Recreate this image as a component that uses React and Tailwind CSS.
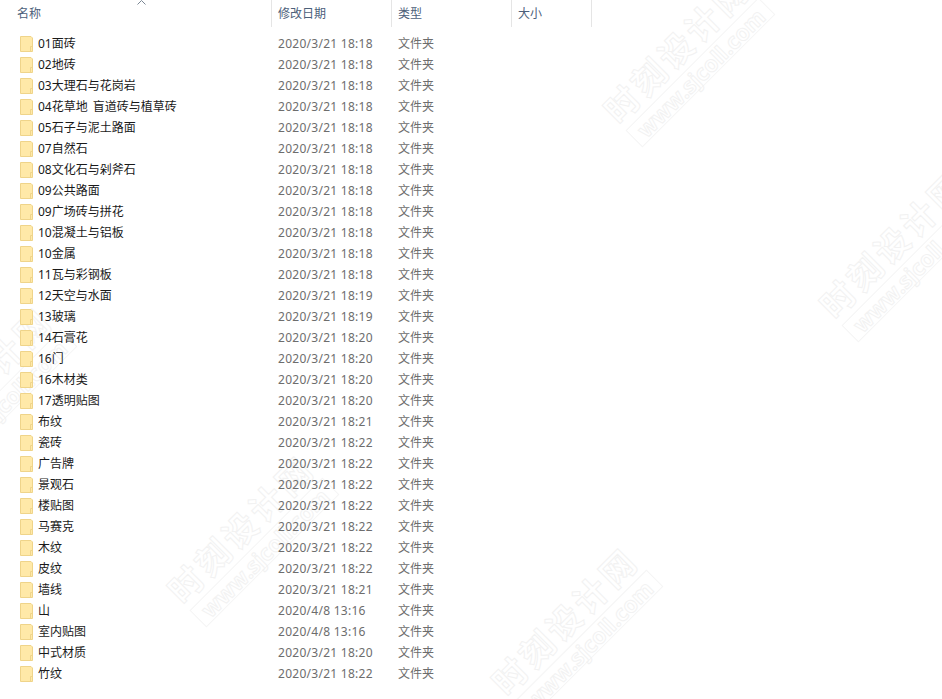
const rows = [
  ["01面砖", "2020/3/21 18:18"],
  ["02地砖", "2020/3/21 18:18"],
  ["03大理石与花岗岩", "2020/3/21 18:18"],
  ["04花草地 盲道砖与植草砖", "2020/3/21 18:18"],
  ["05石子与泥土路面", "2020/3/21 18:18"],
  ["07自然石", "2020/3/21 18:18"],
  ["08文化石与剁斧石", "2020/3/21 18:18"],
  ["09公共路面", "2020/3/21 18:18"],
  ["09广场砖与拼花", "2020/3/21 18:18"],
  ["10混凝土与铝板", "2020/3/21 18:18"],
  ["10金属", "2020/3/21 18:18"],
  ["11瓦与彩钢板", "2020/3/21 18:18"],
  ["12天空与水面", "2020/3/21 18:19"],
  ["13玻璃", "2020/3/21 18:19"],
  ["14石膏花", "2020/3/21 18:20"],
  ["16门", "2020/3/21 18:20"],
  ["16木材类", "2020/3/21 18:20"],
  ["17透明贴图", "2020/3/21 18:20"],
  ["布纹", "2020/3/21 18:21"],
  ["瓷砖", "2020/3/21 18:22"],
  ["广告牌", "2020/3/21 18:22"],
  ["景观石", "2020/3/21 18:22"],
  ["楼贴图", "2020/3/21 18:22"],
  ["马赛克", "2020/3/21 18:22"],
  ["木纹", "2020/3/21 18:22"],
  ["皮纹", "2020/3/21 18:22"],
  ["墙线", "2020/3/21 18:21"],
  ["山", "2020/4/8 13:16"],
  ["室内贴图", "2020/4/8 13:16"],
  ["中式材质", "2020/3/21 18:20"],
  ["竹纹", "2020/3/21 18:22"],
];

function Folder() {
  return (
    <svg width="13" height="16" viewBox="0 0 13 16" className="shrink-0">
      <path d="M0.5 0.5H11L12.5 2V15.5H0.5Z" fill="#ffe9a8" stroke="#efd48a" />
      <path d="M10.5 15V10.5H12.5" fill="none" stroke="#efd48a" />
    </svg>
  );
}

function Watermark({ className }) {
  return (
    <div className={"absolute pointer-events-none -rotate-45 origin-center flex flex-col items-center whitespace-nowrap text-transparent font-bold leading-none " + className}>
      <div className="text-[34px] tracking-[4px] [-webkit-text-stroke:1px_#f2f2f2]">时刻设计网</div>
      <div className="mt-1 border border-[#f5f5f5] px-2 text-[22px] [-webkit-text-stroke:1px_#f2f2f2]">www.sjcoll.com</div>
    </div>
  );
}

const font = "font-['Noto_Sans','Noto_Sans_CJK_SC',sans-serif]";

export default function App() {
  return (
    <div className={"relative w-[942px] h-[699px] overflow-hidden bg-white text-[12px] leading-[16px] " + font}>
      <Watermark className="left-[592px] top-[28px]" />
      <Watermark className="left-[808px] top-[223px]" />
      <Watermark className="left-[156px] top-[508px]" />
      <Watermark className="left-[-106px] top-[360px]" />
      <Watermark className="left-[480px] top-[600px]" />

      <div className="relative flex h-[27px] text-[#4c607a]">
        <div className="w-[271px] shrink-0 pl-[17px] pt-[6px] relative">
          名称
          <svg width="9" height="5" viewBox="0 0 9 5" className="absolute left-[137px] top-0">
            <path d="M0.5 4.5L4.5 0.5L8.5 4.5" fill="none" stroke="#7b8794" />
          </svg>
        </div>
        <div className="w-[120px] shrink-0 border-l border-[#e5e5e5] pl-[6px] pt-[6px]">修改日期</div>
        <div className="w-[120px] shrink-0 border-l border-[#e5e5e5] pl-[6px] pt-[6px]">类型</div>
        <div className="w-[81px] shrink-0 border-x border-[#e5e5e5] pl-[6px] pt-[6px]">大小</div>
      </div>

      <div className="relative pt-[6px]">
        {rows.map(([name, date]) => (
          <div key={name} className="flex items-center h-[21px]">
            <div className="w-[272px] shrink-0 flex items-center pl-[20px] gap-[5px] text-[#1a1a1a] [word-spacing:2px]">
              <Folder />
              <span>{name}</span>
            </div>
            <div className="w-[120px] shrink-0 pl-[6px] text-[#6d6d6d] tracking-[0.27px]">{date}</div>
            <div className="pl-[6px] text-[#6d6d6d]">文件夹</div>
          </div>
        ))}
      </div>
    </div>
  );
}
